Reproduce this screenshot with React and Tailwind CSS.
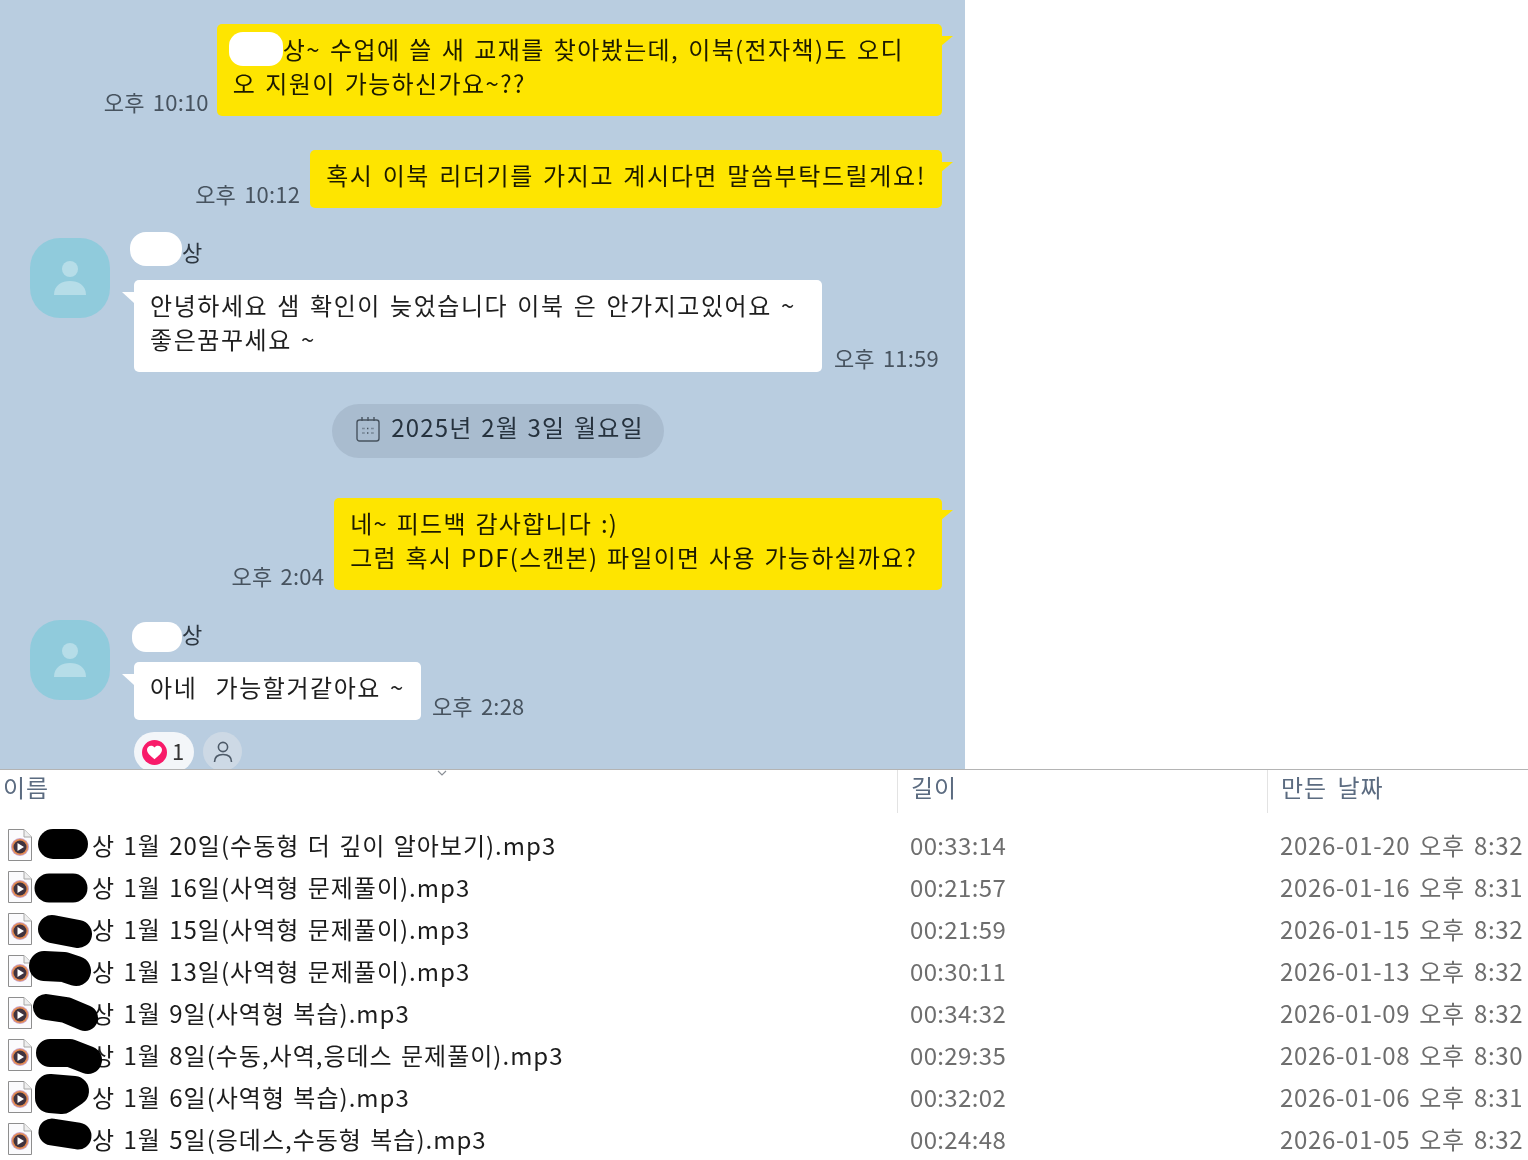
const files = [
  { name: '상 1월 20일(수동형 더 깊이 알아보기).mp3', len: '00:33:14', date: '2026-01-20 오후 8:32', mark: 'M53 20 L73 20', w: 30 },
  { name: '상 1월 16일(사역형 문제풀이).mp3', len: '00:21:57', date: '2026-01-16 오후 8:31', mark: 'M49 22 L73 22', w: 29 },
  { name: '상 1월 15일(사역형 문제풀이).mp3', len: '00:21:59', date: '2026-01-15 오후 8:32', mark: 'M52 21 L78 26', w: 28 },
  { name: '상 1월 13일(사역형 문제풀이).mp3', len: '00:30:11', date: '2026-01-13 오후 8:32', mark: 'M44 16 L64 17 L76 21', w: 30 },
  { name: '상 1월 9일(사역형 복습).mp3', len: '00:34:32', date: '2026-01-09 오후 8:32', mark: 'M46 15 L66 18 L85 26', w: 26 },
  { name: '상 1월 8일(수동,사역,응데스 문제풀이).mp3', len: '00:29:35', date: '2026-01-08 오후 8:30', mark: 'M50 19 L70 19 L88 26', w: 28 },
  { name: '상 1월 6일(사역형 복습).mp3', len: '00:32:02', date: '2026-01-06 오후 8:31', mark: 'M50 13 L74 15 L62 23 L50 22 Z', w: 30 },
  { name: '상 1월 5일(응데스,수동형 복습).mp3', len: '00:24:48', date: '2026-01-05 오후 8:32', mark: 'M52 14 L78 18', w: 27 },
]

const Avatar = () => (
  <div className="w-20 h-20 shrink-0 rounded-[30px] bg-[#90cbdc] flex items-center justify-center">
    <svg width="36" height="36" viewBox="0 0 36 36" fill="#b6dde8">
      <circle cx="18" cy="9" r="8" />
      <path d="M2 35 C2 25 10 21 18 21 C26 21 34 25 34 35 Z" />
    </svg>
  </div>
)

const Time = ({ children }) => (
  <span className="text-[22px] leading-[26px] tracking-[0.2px] [word-spacing:3px] text-[#47535f] whitespace-nowrap mb-[2px]">{children}</span>
)

const MyBubble = ({ children, className }) => (
  <div className={`relative bg-[#fee500] rounded-[5px] pl-4 pt-2 pb-4 text-[24px] leading-[34px] [word-spacing:2.2px] text-[#1c1a00] whitespace-nowrap ${className}`}>
    {children}
    <span className="absolute right-[-11px] top-[12px] w-0 h-0 border-t-[10px] border-t-[#fee500] border-r-[12px] border-r-transparent" />
  </div>
)

const TheirBubble = ({ children, className }) => (
  <div className={`relative bg-white rounded-[5px] pl-4 pt-2 pb-4 text-[24px] leading-[34px] [word-spacing:2.2px] text-[#1e1e1e] whitespace-nowrap ${className}`}>
    {children}
    <span className="absolute left-[-12px] top-[12px] w-0 h-0 border-t-[11px] border-t-white border-l-[12px] border-l-transparent" />
  </div>
)

const FileIcon = () => (
  <svg width="24" height="32" viewBox="0 0 24 32" className="shrink-0">
    <path d="M0.5 0.5 H16 L23.5 8 V31.5 H0.5 Z" fill="#fbfbfd" stroke="#8e8e8e" />
    <path d="M16 0.5 V8 H23.5" fill="#eeeeee" stroke="#a8a8a8" />
    <circle cx="12" cy="18" r="9" fill="#c9a2c8" />
    <circle cx="12" cy="18" r="8" fill="#e58a4e" />
    <circle cx="12" cy="18" r="6.5" fill="#40323f" />
    <path d="M9.5 14 L16 18 L9.5 22 Z" fill="#ffffff" />
  </svg>
)

const App = () => {
  return (
    <div className="w-[1528px] h-[1160px] overflow-hidden bg-white blur-[0.4px] font-['Noto_Sans_CJK_KR','Noto_Sans',sans-serif]">
      <section className="w-[965px] h-[769px] overflow-hidden bg-[#b9cde0] pt-6">
        <div className="flex justify-end items-end gap-2 pr-[23px]">
          <Time>오후 10:10</Time>
          <MyBubble className="pr-[38px] tracking-[1.4px]">
            <span className="inline-block align-top w-[54px] h-[34px] -ml-1 bg-white rounded-[14px]" />
            상~ 수업에 쓸 새 교재를 찾아봤는데, 이북(전자책)도 오디
            <br />
            오 지원이 가능하신가요~??
          </MyBubble>
        </div>

        <div className="flex justify-end items-end gap-[10px] pr-[23px] mt-[34px]">
          <Time>오후 10:12</Time>
          <MyBubble className="pr-4 tracking-[1.6px]">혹시 이북 리더기를 가지고 계시다면 말씀부탁드릴게요!</MyBubble>
        </div>

        <div className="flex gap-6 pl-[30px] mt-[30px]">
          <Avatar />
          <div>
            <div className="h-[42px] flex items-start text-[22px] leading-[26px] text-[#2c3640]">
              <span className="w-[52px] h-[34px] -mt-[6px] -ml-[4px] bg-white rounded-[16px]" />
              <span>상</span>
            </div>
            <div className="flex items-end gap-3">
              <TheirBubble className="pr-[26px] tracking-[1.55px]">
                안녕하세요 샘 확인이 늦었습니다 이북 은 안가지고있어요 ~
                <br />
                좋은꿈꾸세요 ~
              </TheirBubble>
              <Time>오후 11:59</Time>
            </div>
          </div>
        </div>

        <div className="ml-[332px] mt-8 w-[332px] h-[54px] pb-2 pl-1 rounded-[27px] bg-[#a9bccf] flex items-center justify-center gap-[11px] text-[24px] text-[#26323e] tracking-[1.2px] [word-spacing:2px]">
          <svg width="24" height="26" viewBox="0 0 24 26" fill="none" stroke="#47535f" strokeWidth="1.4" className="mt-1">
            <rect x="1" y="4" width="22" height="21" rx="2.5" />
            <path d="M6 1 V5 M12 1 V5 M18 1 V5" />
            <path d="M6.5 12.5 H8.5 M11 12.5 H13 M15.5 12.5 H17.5 M6.5 17 H8.5 M11 17 H13 M15.5 17 H17.5" strokeDasharray="1 0.6" />
          </svg>
          <span className="whitespace-nowrap">2025년 2월 3일 월요일</span>
        </div>

        <div className="flex justify-end items-end gap-[10px] pr-[23px] mt-10">
          <Time>오후 2:04</Time>
          <MyBubble className="pr-[25px] tracking-[1.23px]">
            네~ 피드백 감사합니다 :)
            <br />
            그럼 혹시 PDF(스캔본) 파일이면 사용 가능하실까요?
          </MyBubble>
        </div>

        <div className="flex gap-6 pl-[30px] mt-[30px]">
          <Avatar />
          <div>
            <div className="h-[42px] flex items-start text-[22px] leading-[26px] text-[#2c3640]">
              <span className="w-[50px] h-[30px] mt-[2px] -ml-[2px] bg-white rounded-[14px]" />
              <span>상</span>
            </div>
            <div className="flex items-end gap-[11px]">
              <TheirBubble className="pr-4 tracking-[1.55px]">아네&nbsp; 가능할거같아요 ~</TheirBubble>
              <Time>오후 2:28</Time>
            </div>
            <div className="flex gap-[9px] mt-3">
              <div className="w-[60px] h-[40px] rounded-[20px] bg-[#f3f6f9] flex items-center pl-2 gap-[5px]">
                <span className="w-[25px] h-[25px] rounded-full bg-[#f81b69] flex items-center justify-center">
                  <svg width="17" height="15" viewBox="0 0 24 22" fill="#ffffff">
                    <path d="M12 21 C5 15 1 11.5 1 7 C1 3.5 3.6 1 7 1 C9 1 10.9 2 12 3.6 C13.1 2 15 1 17 1 C20.4 1 23 3.5 23 7 C23 11.5 19 15 12 21 Z" />
                  </svg>
                </span>
                <span className="text-[22px] leading-none text-[#333333] -mt-1">1</span>
              </div>
              <div className="w-[39px] h-[39px] rounded-full bg-[#cdd9e5] flex items-center justify-center">
                <svg width="20" height="22" viewBox="0 0 20 22" fill="none" stroke="#4d5a68" strokeWidth="1.6">
                  <circle cx="10" cy="6" r="4.6" />
                  <path d="M1.5 21 C1.5 16 5 13.5 10 13.5 C15 13.5 18.5 16 18.5 21" />
                </svg>
              </div>
            </div>
          </div>
        </div>
      </section>

      <div className="relative border-t border-[#b4b4b4] grid grid-cols-[897px_370px_1fr] h-[44px] text-[24px] leading-[34px] tracking-[1px] [word-spacing:4px] text-[#5b6b80]">
        <div className="pl-[3px]">이름</div>
        <div className="border-l border-[#e3e3e3] pl-[13px]">길이</div>
        <div className="border-l border-[#e3e3e3] pl-[13px]">만든 날짜</div>
        <svg width="10" height="6" viewBox="0 0 10 6" fill="none" stroke="#8a8f96" strokeWidth="1.2" className="absolute left-[437px] top-0">
          <path d="M1 1 L5 5 L9 1" />
        </svg>
      </div>

      <div className="pt-[11px]">
        {files.map(f => (
          <div key={f.date} className="relative grid grid-cols-[897px_370px_1fr] h-[42px] items-center text-[24px] whitespace-nowrap">
            <div className="flex items-center pl-2 gap-[60px] text-[#1c1c1c]">
              <FileIcon />
              <span className="tracking-[1px] [word-spacing:2px]">{f.name}</span>
            </div>
            <div className="pl-[13px] text-[#6e6e6e] tracking-[0.35px]">{f.len}</div>
            <div className="pl-[13px] text-[#6e6e6e] tracking-[0.7px] [word-spacing:3px]">{f.date}</div>
            <svg width="110" height="42" className="absolute left-0 top-0 overflow-visible" fill="none">
              <path d={f.mark} stroke="#000000" fill={f.mark.endsWith('Z') ? '#000000' : 'none'} strokeWidth={f.w} strokeLinecap="round" strokeLinejoin="round" />
            </svg>
          </div>
        ))}
      </div>
    </div>
  )
}

export default App
